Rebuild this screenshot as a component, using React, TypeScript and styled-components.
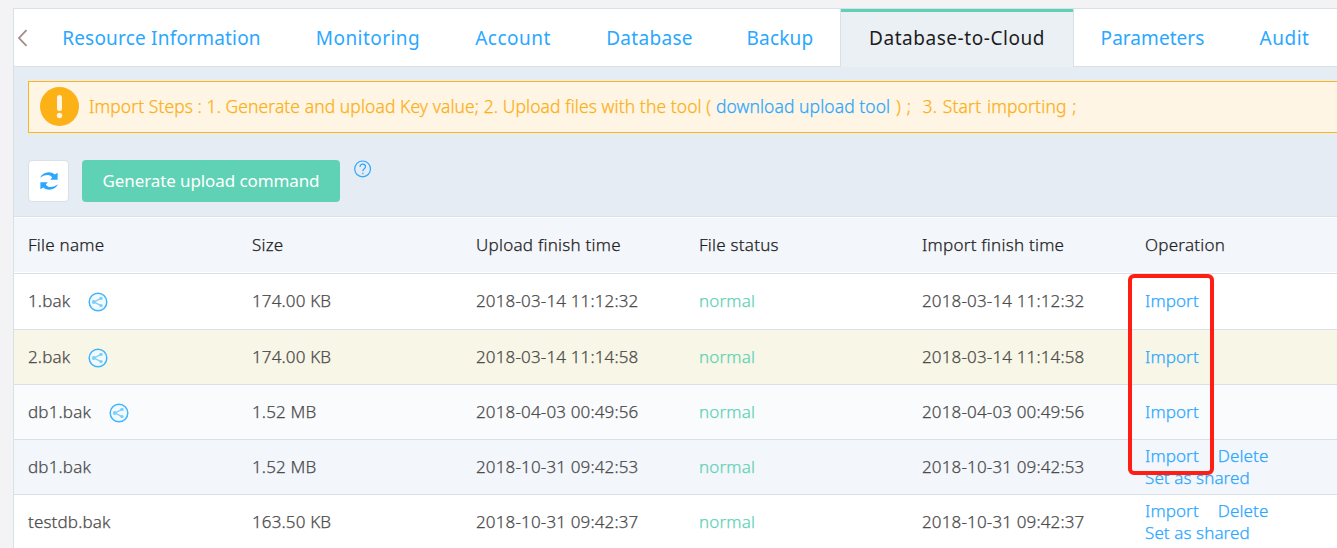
import React from "react";
import styled, { createGlobalStyle } from "styled-components";

const Global = createGlobalStyle`
  * { box-sizing: border-box; }
  html, body { margin: 0; padding: 0; overflow: hidden; }
  body { background: #f3f3f5; font-family: "Noto Sans", "Open Sans", sans-serif; font-size: 17px; font-weight: 300; color: #4c4c4c; }
`;

const Page = styled.div`
  width: 1337px;
  height: 548px;
  padding: 8px 0 0 13px;
  overflow: hidden;
`;
const Panel = styled.main`
  height: 540px;
  border-left: 1px solid #d8e0ea;
  border-top: 1px solid #d8e0ea;
  background: #e6ecf4;
`;
const TabBar = styled.nav`
  display: flex;
  height: 58px;
  background: #fff;
`;
const Scroll = styled.button`
  width: 20px;
  flex: none;
  padding: 0 0 0 3px;
  border: 0;
  border-bottom: 1px solid #d8e0ea;
  background: none;
  display: flex;
  align-items: center;
`;
const Tab = styled.a<{ $w: number; $ls?: number; $active?: boolean }>`
  flex: none;
  width: ${(p) => p.$w}px;
  height: 58px;
  display: flex;
  justify-content: center;
  font-size: 19px;
  font-weight: 400;
  line-height: 58px;
  letter-spacing: ${(p) => p.$ls ?? 0.4}px;
  white-space: nowrap;
  color: ${(p) => (p.$active ? "#1d1d1d" : "#2ba7ff")};
  background: ${(p) => (p.$active ? "#ebf0f4" : "#fff")};
  border: 0 solid #d8e0ea;
  border-width: ${(p) => (p.$active ? "0 1px" : "0 0 1px")};
  box-shadow: ${(p) => (p.$active ? "inset 0 3px 0 #5fd2b6" : "none")};
`;
const Notice = styled.section`
  margin: 14px 0 0 14px;
  height: 52px;
  padding: 5px 0 0 11px;
  display: flex;
  align-items: flex-start;
  border: 1px solid #fcb61a;
  border-right: 0;
  background: #fff5e4;
  color: #fcb017;
`;
const NoticeText = styled.p`
  margin: 0 0 0 10px;
  line-height: 39px;
  white-space: pre;
  font-size: 17.5px;
  letter-spacing: 0.07px;
  -webkit-text-stroke: 0.25px currentColor;
`;
const LastStep = styled.span`
  word-spacing: 1px;
  letter-spacing: 0.15px;
`;
const Link = styled.a`
  color: #2ba7ff;
`;
const Toolbar = styled.div`
  display: flex;
  align-items: flex-start;
  height: 84px;
  padding: 27px 0 0 14px;
  border-bottom: 1px solid #d8e0ea;
`;
const RefreshButton = styled.button`
  width: 41px;
  height: 42px;
  padding: 0;
  display: flex;
  align-items: center;
  justify-content: center;
  border: 1px solid #d8e0ea;
  border-radius: 4px;
  background: #fff;
`;
const PrimaryButton = styled.button`
  width: 258px;
  height: 42px;
  margin: 0 14px 0 13px;
  padding: 0 0 2px;
  border: 0;
  border-radius: 4px;
  background: #5fd2b6;
  color: #fff;
  font: 400 17px "Noto Sans", sans-serif;
  letter-spacing: -0.1px;
`;
const Row = styled.div<{ $h: number; $bg: string; $head?: boolean }>`
  display: grid;
  grid-template-columns: 224px 224px 223px 223px 223px 1fr;
  align-items: center;
  height: ${(p) => p.$h}px;
  padding-left: 14px;
  background: ${(p) => p.$bg};
  border-bottom: 1px solid #d8e0ea;
  letter-spacing: ${(p) => (p.$head ? 0.25 : 0.15)}px;
  -webkit-text-stroke: 0.25px currentColor;
  color: ${(p) => (p.$head ? "#1f1f1f" : "#4c4c4c")};
  box-shadow: ${(p) => (p.$head ? "inset 0 1px 0 #fff, inset 0 -1px 0 #fff" : "none")};
`;
const Cell = styled.div<{ $color?: string }>`
  display: flex;
  align-items: center;
  padding-bottom: 2px;
  white-space: nowrap;
  color: ${(p) => p.$color ?? "inherit"};
`;
const ShareIcon = styled.svg`
  margin: 3px 0 0 18px;
`;
const Actions = styled.div`
  display: flex;
  flex-wrap: wrap;
  column-gap: 19px;
  width: 140px;
  line-height: 22px;
  padding-bottom: 1px;
  letter-spacing: 0.1px;
  white-space: nowrap;
`;
const Highlight = styled.div`
  position: absolute;
  left: 1128px;
  top: 274px;
  width: 86px;
  height: 201px;
  border: 4px solid #ff1d14;
  border-radius: 6px;
`;

const tabs = [
  { label: "Resource Information", w: 255, ls: 0.2 },
  { label: "Monitoring", w: 158, ls: 0.45 },
  { label: "Account", w: 132, ls: 0.5 },
  { label: "Database", w: 141, ls: 0.3 },
  { label: "Backup", w: 120, ls: 0.2 },
  { label: "Database-to-Cloud", w: 234, ls: 0.55, active: true },
  { label: "Parameters", w: 157, ls: 0.05 },
  { label: "Audit", w: 107, ls: 0.5 },
];

const rows = [
  { name: "1.bak", shared: true, size: "174.00 KB", time: "2018-03-14 11:12:32", h: 56, bg: "#fff" },
  { name: "2.bak", shared: true, size: "174.00 KB", time: "2018-03-14 11:14:58", h: 55, bg: "#f8f6e6" },
  { name: "db1.bak", shared: true, size: "1.52 MB", time: "2018-04-03 00:49:56", h: 55, bg: "#fafbfd" },
  { name: "db1.bak", shared: false, size: "1.52 MB", time: "2018-10-31 09:42:53", h: 55, bg: "#f3f6fb" },
  { name: "testdb.bak", shared: false, size: "163.50 KB", time: "2018-10-31 09:42:37", h: 55, bg: "#fff" },
];

const Share = () => (
  <ShareIcon width="20" height="20" viewBox="0 0 20 20" fill="none">
    <circle cx="10" cy="10" r="8.8" fill="#f0faff" stroke="#42b4fb" strokeWidth="1.5" />
    <path d="M13 6.4 6 10l7 3.600" stroke="#83cdf8" strokeWidth="1.3" />
    <circle cx="13" cy="6.4" r="1.7" fill="#83cdf8" />
    <circle cx="5.800" cy="10" r="2" fill="#83cdf8" />
    <circle cx="13" cy="13.600" r="1.7" fill="#83cdf8" />
  </ShareIcon>
);

export default function App() {
  return (
    <Page>
      <Global />
      <Panel>
        <TabBar>
          <Scroll>
            <svg width="12" height="18" viewBox="0 0 12 18" fill="none">
              <path d="M9.500 1.200 2 9l7.500 7.800" stroke="#a58a88" strokeWidth="1.8" />
            </svg>
          </Scroll>
          {tabs.map((t) => (
            <Tab key={t.label} $w={t.w} $ls={t.ls} $active={t.active}>{t.label}</Tab>
          ))}
        </TabBar>
        <Notice>
          <svg width="39" height="39" viewBox="0 0 39 39">
            <circle cx="19.500" cy="19.500" r="19.500" fill="#fcb117" />
            <rect x="17" y="8" width="5" height="16" rx="2.500" fill="#fff5e4" />
            <circle cx="19.500" cy="28.500" r="2.700" fill="#fff5e4" />
          </svg>
          <NoticeText>
            {"Import Steps : 1. Generate and upload Key value; 2. Upload files with the tool ( "}
            <Link>download upload tool</Link>
            <LastStep>{" ) ;  3. Start importing ;"}</LastStep>
          </NoticeText>
        </Notice>
        <Toolbar>
          <RefreshButton>
            <svg width="18" height="18" viewBox="0 0 18 18" fill="#2ba7ff">
              <path d="M0 5.800C1.600 2.400 4.800.3 8.600.3c2.400 0 4.500.7 6.100 2.200L17.600.8v7H10.200l2-2.200C11.200 4.200 9.800 3 7.600 3 4.600 3 2.200 4.300 0 5.800z" />
              <path d="M18 12.200c-1.600 3.400-4.800 5.500-8.600 5.500-2.400 0-4.500-.7-6.100-2.200L.4 17.200v-7h7.400l-2 2.200c1 1.400 2.400 2.600 4.600 2.600 3 0 5.400-1.300 7.600-2.800z" />
            </svg>
          </RefreshButton>
          <PrimaryButton>Generate upload command</PrimaryButton>
          <svg width="18" height="18" viewBox="0 0 18 18" fill="none" stroke="#2ba7ff" strokeWidth="1.200">
            <circle cx="8.600" cy="8.900" r="7.900" />
            <path d="M6 7C6 5.200 7.100 4.200 8.700 4.200s2.800 1 2.800 2.500c0 2-2.700 2.200-2.700 4.600M8.800 12.700v1.500" />
          </svg>
        </Toolbar>
        <Row $h={57} $bg="#f3f6fb" $head>
          {["File name", "Size", "Upload finish time", "File status", "Import finish time", "Operation"].map((h) => (
            <Cell key={h}>{h}</Cell>
          ))}
        </Row>
        {rows.map((r, i) => (
          <Row key={i} $h={r.h} $bg={r.bg}>
            <Cell>{r.name}{r.shared && <Share />}</Cell>
            <Cell>{r.size}</Cell>
            <Cell>{r.time}</Cell>
            <Cell $color="#5fd2b6">normal</Cell>
            <Cell>{r.time}</Cell>
            <Actions>
              <Link>Import</Link>
              {!r.shared && <Link>Delete</Link>}
              {!r.shared && <Link>Set as shared</Link>}
            </Actions>
          </Row>
        ))}
      </Panel>
      <Highlight />
    </Page>
  );
}
